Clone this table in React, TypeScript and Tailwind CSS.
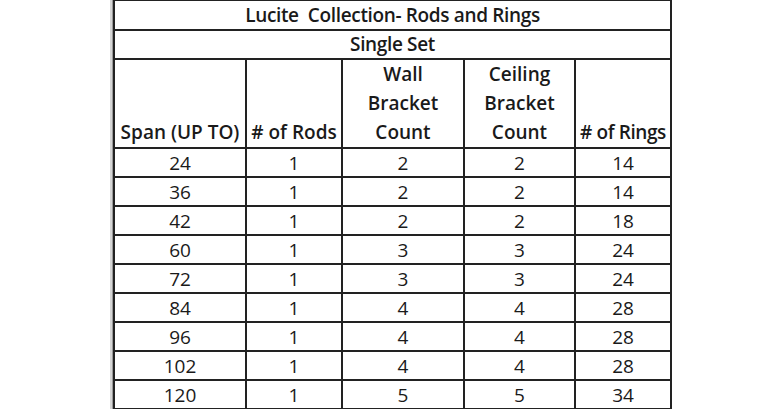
import React from "react";

const rows: [string, string, string, string, string][] = [
  ["24", "1", "2", "2", "14"],
  ["36", "1", "2", "2", "14"],
  ["42", "1", "2", "2", "18"],
  ["60", "1", "3", "3", "24"],
  ["72", "1", "3", "3", "24"],
  ["84", "1", "4", "4", "28"],
  ["96", "1", "4", "4", "28"],
  ["102", "1", "4", "4", "28"],
  ["120", "1", "5", "5", "34"],
];

const head = "border-2 border-[#222] text-center font-semibold align-bottom p-0 leading-[29px] whitespace-nowrap";

export default function App() {
  return (
    <div className="w-[779px] h-[409px] bg-white overflow-hidden flex" style={{ fontFamily: "'Open Sans', Lato, sans-serif" }}>
      <div className="ml-[110px] w-[3px] h-full bg-[#d6d6d6] border-r border-[#9a9a9a]" />
      <table className="border-collapse text-[#1a1a1a] text-[19px] leading-[27px] self-start -mt-px">
        <colgroup>
          <col className="w-[132px]" />
          <col className="w-[96px]" />
          <col className="w-[122px]" />
          <col className="w-[111px]" />
          <col className="w-[96px]" />
        </colgroup>
        <tbody>
          <tr className="h-[30px]">
            <td colSpan={5} className="border-2 border-[#222] text-center font-semibold p-0 tracking-[-0.35px]">
              Lucite&nbsp; Collection- Rods and Rings
            </td>
          </tr>
          <tr className="h-[29px]">
            <td colSpan={5} className="border-2 border-[#222] text-center font-semibold p-0 tracking-[-0.35px]">
              Single Set
            </td>
          </tr>
          <tr className="h-[88px]">
            <td className={head}>Span (UP TO)</td>
            <td className={head}># of Rods</td>
            <td className={head}>
              Wall<br />Bracket<br />Count
            </td>
            <td className={head}>
              Ceiling<br />Bracket<br />Count
            </td>
            <td className={`${head} tracking-[-0.4px]`}># of Rings</td>
          </tr>
          {rows.map((r) => (
            <tr key={r[0]} className="h-[29px]">
              {r.map((c, i) => (
                <td key={i} className="border-2 border-[#222] text-center p-0 pt-px leading-[26px]">
                  {c}
                </td>
              ))}
            </tr>
          ))}
        </tbody>
      </table>
    </div>
  );
}
